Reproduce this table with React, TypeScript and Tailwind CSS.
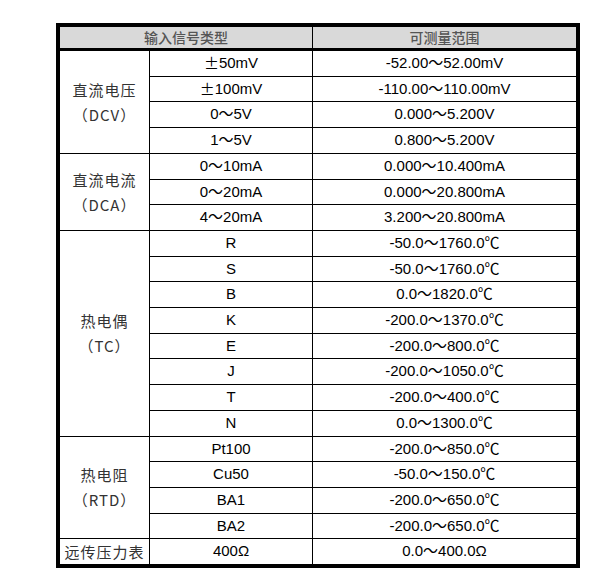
import React from "react";

type Group = { label: string[]; rows: [string, string][] };

const groups: Group[] = [
  {
    label: ["直流电压", "（DCV）"],
    rows: [
      ["±50mV", "-52.00～52.00mV"],
      ["±100mV", "-110.00～110.00mV"],
      ["0～5V", "0.000～5.200V"],
      ["1～5V", "0.800～5.200V"],
    ],
  },
  {
    label: ["直流电流", "（DCA）"],
    rows: [
      ["0～10mA", "0.000～10.400mA"],
      ["0～20mA", "0.000～20.800mA"],
      ["4～20mA", "3.200～20.800mA"],
    ],
  },
  {
    label: ["热电偶", "（TC）"],
    rows: [
      ["R", "-50.0～1760.0℃"],
      ["S", "-50.0～1760.0℃"],
      ["B", "0.0～1820.0℃"],
      ["K", "-200.0～1370.0℃"],
      ["E", "-200.0～800.0℃"],
      ["J", "-200.0～1050.0℃"],
      ["T", "-200.0～400.0℃"],
      ["N", "0.0～1300.0℃"],
    ],
  },
  {
    label: ["热电阻", "（RTD）"],
    rows: [
      ["Pt100", "-200.0～850.0℃"],
      ["Cu50", "-50.0～150.0℃"],
      ["BA1", "-200.0～650.0℃"],
      ["BA2", "-200.0～650.0℃"],
    ],
  },
  {
    label: ["远传压力表"],
    rows: [["400Ω", "0.0～400.0Ω"]],
  },
];

const font = { fontFamily: '"Liberation Sans", "Noto Sans CJK SC", sans-serif' };

function Txt({ s }: { s: string }) {
  const parts = s.split("±");
  if (parts.length === 1) return <>{s}</>;
  return (
    <>
      <span className="inline-block w-[15px] text-center font-['Noto_Sans_CJK_SC']">±</span>
      {parts[1]}
    </>
  );
}

export default function App() {
  let rowStart = 1;
  const cells: React.ReactNode[] = [];
  groups.forEach((g, gi) => {
    const span = g.rows.length;
    cells.push(
      <div
        key={`g${gi}`}
        className="bg-white flex flex-col items-center justify-center text-[15px] leading-[25px] text-[#333] tracking-[1px] font-['Noto_Sans_CJK_SC']"
        style={{ gridColumn: 1, gridRow: `${rowStart} / span ${span}` }}
      >
        {g.label.map((l, i) => (
          <div key={i}>{l}</div>
        ))}
      </div>
    );
    g.rows.forEach((r, ri) => {
      cells.push(
        <div
          key={`a${gi}-${ri}`}
          className="bg-white flex items-center justify-center text-[15px] text-black"
          style={{ gridColumn: 2, gridRow: rowStart + ri }}
        >
          <Txt s={r[0]} />
        </div>
      );
      cells.push(
        <div
          key={`b${gi}-${ri}`}
          className="bg-white flex items-center justify-center text-[15px] text-black"
          style={{ gridColumn: 3, gridRow: rowStart + ri }}
        >
          {r[1]}
        </div>
      );
    });
    rowStart += span;
  });

  return (
    <div className="w-[591px] h-[572px] bg-white pt-[23px] pl-[56px]" style={font}>
      <div className="w-[524px] border-4 border-black">
        <div className="grid grid-cols-[252px_263px] gap-px bg-black h-[21px] border-b-[3px] border-black box-content">
          <div className="bg-[#d9d9d9] flex items-center justify-center text-[14px] text-[#555] font-['Noto_Sans_CJK_SC'] font-medium">
            输入信号类型
          </div>
          <div className="bg-[#d9d9d9] flex items-center justify-center text-[14px] text-[#555] font-['Noto_Sans_CJK_SC'] font-medium">
            可测量范围
          </div>
        </div>
        <div className="grid grid-cols-[89px_162px_263px] grid-rows-[repeat(20,minmax(0,1fr))] gap-px bg-black h-[513px]">
          {cells}
        </div>
      </div>
    </div>
  );
}
